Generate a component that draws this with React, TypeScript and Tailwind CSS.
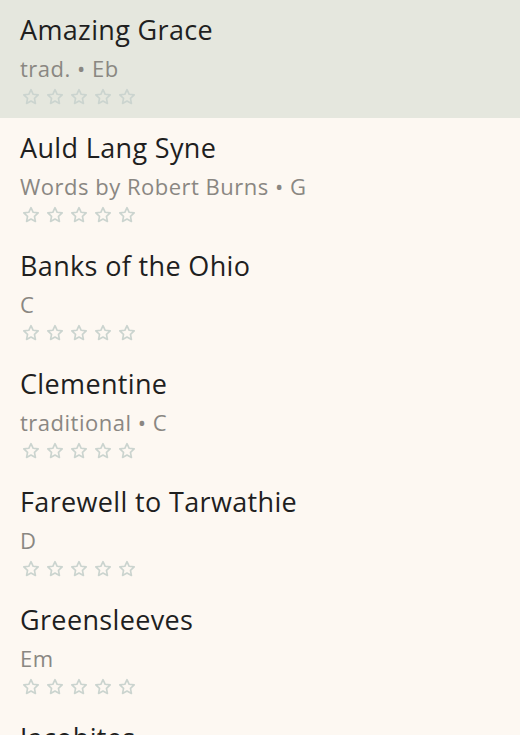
import React from "react";

const songs = [
  { title: "Amazing Grace", sub: "trad. • Eb", selected: true },
  { title: "Auld Lang Syne", sub: "Words by Robert Burns • G" },
  { title: "Banks of the Ohio", sub: "C" },
  { title: "Clementine", sub: "traditional • C" },
  { title: "Farewell to Tarwathie", sub: "D" },
  { title: "Greensleeves", sub: "Em" },
  { title: "Jacobites", sub: "Am" },
];

function StarIcon() {
  return (
    <svg width="18" height="18" viewBox="0 0 24 24" fill="none" stroke="#cbd4cf" strokeWidth="2.2" strokeLinejoin="round">
      <path d="M12 2.2l2.9 6.2 6.7.8-5 4.7 1.3 6.7L12 17.4l-5.9 3.2 1.3-6.7-5-4.7 6.7-.8z" />
    </svg>
  );
}

export default function App() {
  return (
    <div className="w-[520px] h-[735px] overflow-hidden bg-[#fdf8f2]" style={{ fontFamily: '"Open Sans", "Noto Sans", sans-serif' }}>
      {songs.map((s) => (
        <div key={s.title} className={`h-[118px] px-5 pt-[12px] ${s.selected ? "bg-[#e5e7de]" : ""}`}>
          <div className="text-[27px] leading-[36px] text-[#1f1f1f] tracking-[0.35px]">{s.title}</div>
          <div className="text-[22px] leading-[30px] text-[#8a8782] mt-[5px] tracking-[0.5px]">{s.sub}</div>
          <div className="flex gap-[6px] ml-[2px] mt-[5px]">
            {[0, 1, 2, 3, 4].map((i) => (
              <StarIcon key={i} />
            ))}
          </div>
        </div>
      ))}
    </div>
  );
}
